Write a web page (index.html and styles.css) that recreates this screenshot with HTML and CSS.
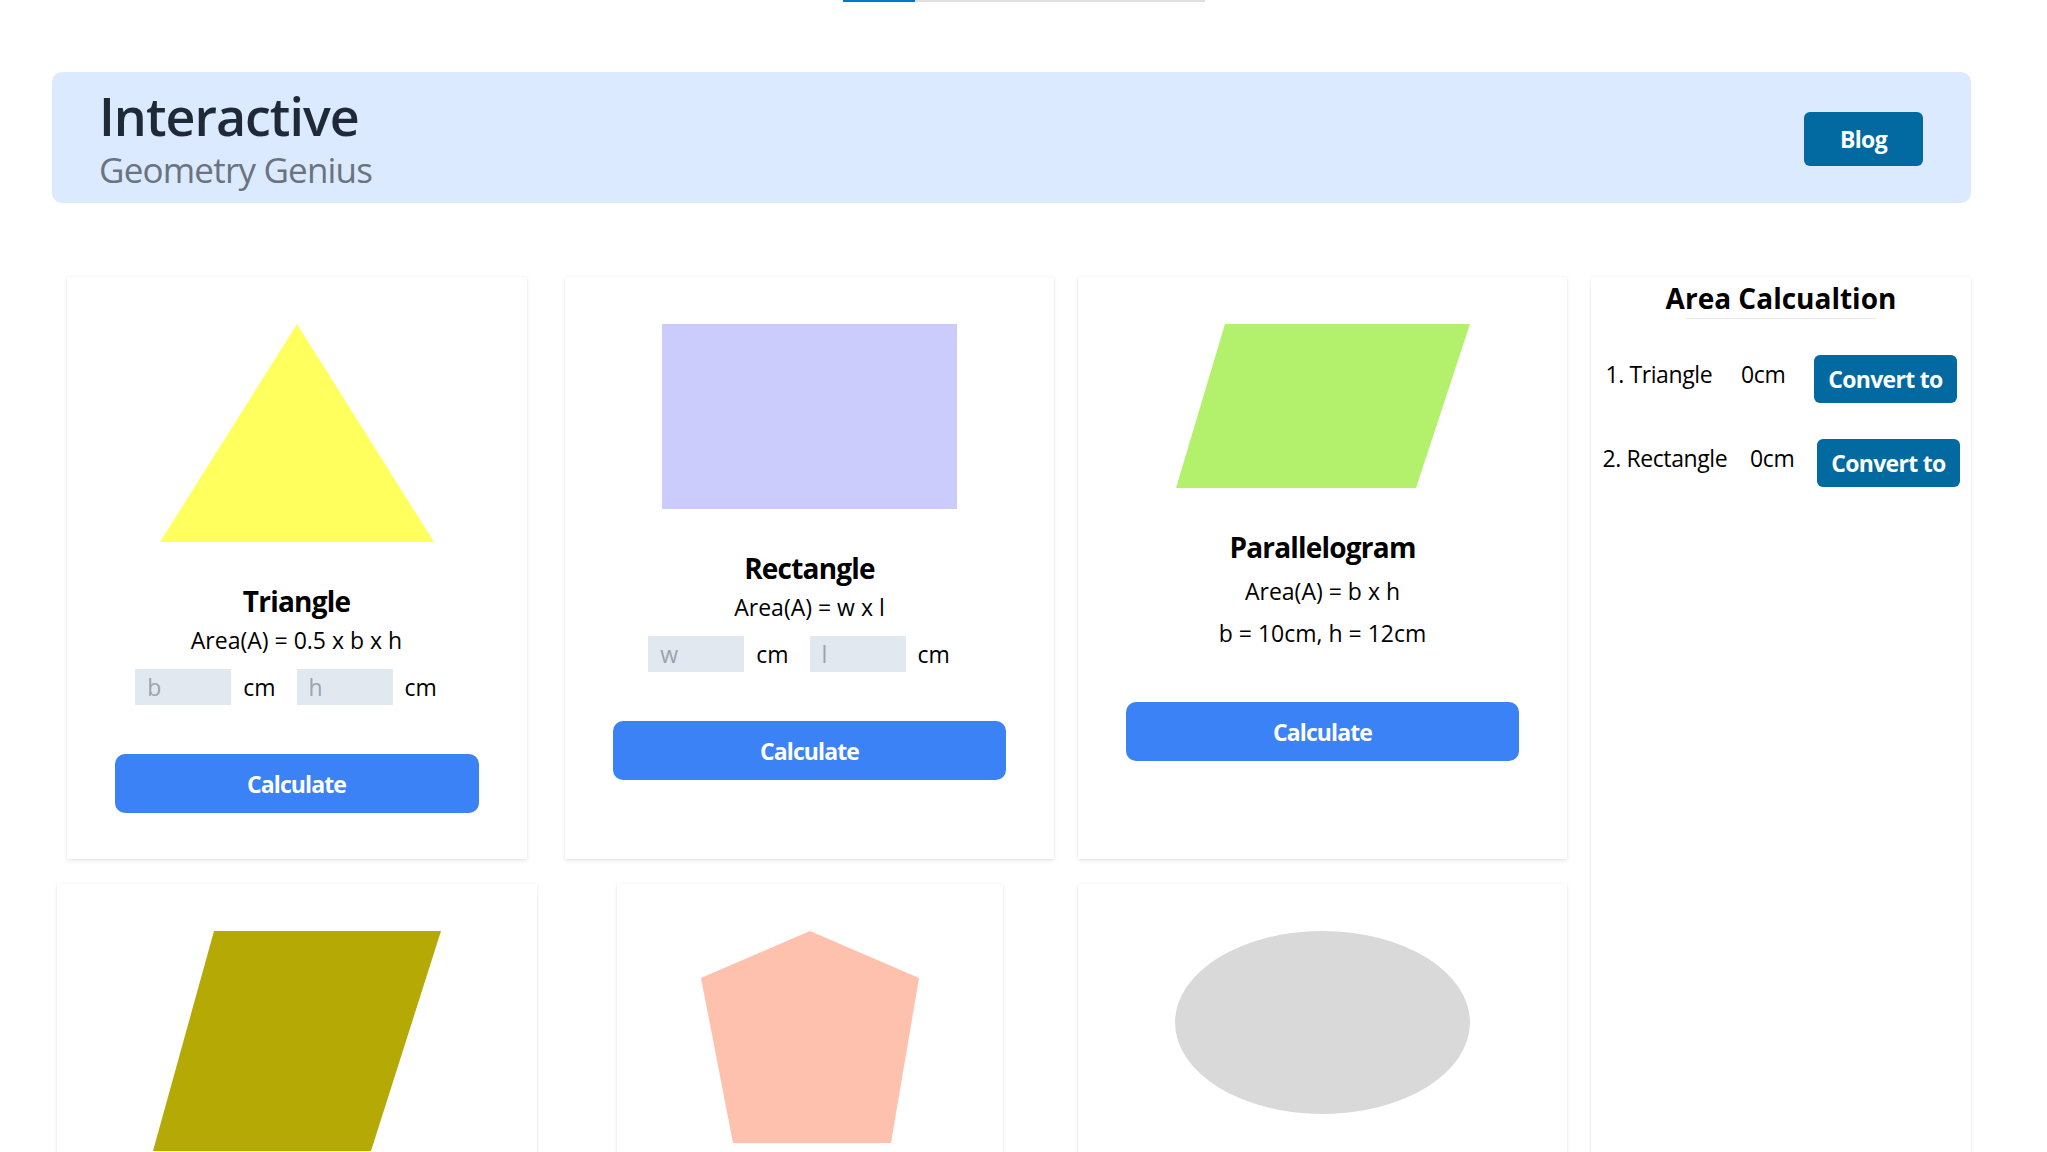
FILE: index.html
```html
<!DOCTYPE html>
<html lang="en">
<head>
<meta charset="utf-8">
<title>Interactive Geometry Genius</title>
<link rel="stylesheet" href="styles.css">
</head>
<body>
<div class="loadbar"><div class="loadbar__fill"></div></div>
<div class="page">
  <header class="hero">
    <div class="hero__titles">
      <h1 class="hero__title">Interactive</h1>
      <p class="hero__subtitle">Geometry Genius</p>
    </div>
    <a class="btn-blog" href="#">Blog</a>
  </header>

  <main class="board">
    <section class="card card--tri">
      <svg class="shape" width="274" height="218" viewBox="0 0 274 218"><polygon points="137,0 274,218 0,218" fill="#ffff5e"/></svg>
      <h3 class="card__title">Triangle</h3>
      <p class="formula">Area(A) = 0.5 x b x h</p>
      <div class="fields">
        <input class="field-input" type="text" placeholder="b"><span class="unit">cm</span>
        <input class="field-input" type="text" placeholder="h"><span class="unit">cm</span>
      </div>
      <button class="calc">Calculate</button>
    </section>

    <section class="card card--rect">
      <div class="shape shape--rect"></div>
      <h3 class="card__title">Rectangle</h3>
      <p class="formula">Area(A) = w x l</p>
      <div class="fields">
        <input class="field-input" type="text" placeholder="w"><span class="unit">cm</span>
        <input class="field-input" type="text" placeholder="l"><span class="unit">cm</span>
      </div>
      <button class="calc">Calculate</button>
    </section>

    <section class="card card--para">
      <svg class="shape" width="294" height="164" viewBox="0 0 294 164"><polygon points="49,0 294,0 240,164 0,164" fill="#b3f06b"/></svg>
      <h3 class="card__title">Parallelogram</h3>
      <p class="formula formula--spaced">Area(A) = b x h</p>
      <p class="formula formula--spaced">b = 10cm, h = 12cm</p>
      <button class="calc calc--para">Calculate</button>
    </section>

    <aside class="panel">
      <h2 class="panel__title">Area Calcualtion</h2>
      <hr class="panel__rule">
      <div class="conv-row">
        <span class="conv-label">1. Triangle</span>
        <span class="conv-label">0cm</span>
        <button class="btn-convert">Convert to</button>
      </div>
      <div class="conv-row">
        <span class="conv-label">2. Rectangle</span>
        <span class="conv-label">0cm</span>
        <button class="btn-convert">Convert to</button>
      </div>
    </aside>

    <section class="card card--trap">
      <svg class="shape" width="288" height="220" viewBox="0 0 288 220"><polygon points="61,0 288,0 218,220 0,220" fill="#b5a905"/></svg>
      <h3 class="card__title">Trapezium</h3>
      <button class="calc">Calculate</button>
    </section>

    <section class="card card--pent">
      <svg class="shape" width="218" height="212" viewBox="0 0 218 212"><polygon points="109,0 218,47 190,212 32,212 0,47" fill="#fec1ae"/></svg>
      <h3 class="card__title">Pentagon</h3>
      <button class="calc">Calculate</button>
    </section>

    <section class="card card--ell">
      <div class="shape shape--ellipse"></div>
      <h3 class="card__title">Ellipse</h3>
      <button class="calc">Calculate</button>
    </section>
  </main>
</div>
</body>
</html>
```

FILE: styles.css
```css
body {
  margin: 0;
  background: #ffffff;
  font-family: "Open Sans", "Noto Sans", sans-serif;
  color: #000000;
}

.loadbar {
  width: 362px;
  height: 2px;
  margin-left: 843px;
  background: #e0e0e0;
}

.loadbar__fill {
  width: 72px;
  height: 2px;
  background: #0078d4;
}

.page {
  width: 1919px;
  margin: 70px 0 0 52px;
  padding-bottom: 52px;
}

/* header */
.hero {
  display: flex;
  justify-content: space-between;
  align-items: center;
  background: #dbeafe;
  border-radius: 10px;
  padding: 14px 48px 11px 47px;
}

.hero__title {
  margin: 0;
  font-size: 52px;
  line-height: 60px;
  font-weight: 600;
  letter-spacing: -1px;
  color: #1f2937;
}

.hero__subtitle {
  margin: 2px 0 0;
  font-size: 35px;
  line-height: 44px;
  font-weight: 400;
  letter-spacing: -0.8px;
  color: #6b7280;
}

.btn-blog {
  display: block;
  width: 119px;
  height: 54px;
  line-height: 54px;
  text-align: center;
  border-radius: 6px;
  background: #0369a1;
  color: #ffffff;
  text-decoration: none;
  font-size: 23px;
  font-weight: 700;
  letter-spacing: -0.7px;
}

/* grid */
.board {
  display: grid;
  grid-template-columns: 489px 489px 489px 380px;
  column-gap: 24px;
  row-gap: 25px;
  margin-top: 74px;
}

.card {
  justify-self: center;
  box-sizing: border-box;
  display: flex;
  flex-direction: column;
  align-items: center;
  background: #ffffff;
  padding: 47px 48px 46px;
  box-shadow: 0 2px 4px rgba(0, 0, 0, 0.08), 0 0 2px rgba(0, 0, 0, 0.07);
}

.card--tri { width: 460px; }
.card--rect { width: 489px; }
.card--para { width: 489px; }
.card--trap { width: 480px; }
.card--pent { width: 386px; }
.card--ell { width: 489px; }

.shape {
  display: block;
  flex: none;
  margin-bottom: 39px;
}

.shape--rect {
  width: 295px;
  height: 185px;
  background: #ccccfc;
}

.shape--ellipse {
  width: 295px;
  height: 183px;
  border-radius: 50%;
  background: #d9d9d9;
}

.card__title {
  margin: 0;
  font-size: 28px;
  line-height: 40px;
  font-weight: 700;
  letter-spacing: -0.8px;
}

.formula {
  margin: 2px 0 0;
  font-size: 23px;
  line-height: 35px;
}

.formula--spaced {
  margin-top: 7px;
}

.fields {
  display: flex;
  align-items: center;
  margin-top: 11px;
}

.field-input {
  box-sizing: border-box;
  width: 96px;
  height: 36px;
  padding: 0 12px;
  border: 0;
  border-radius: 0;
  background: #e2e8f0;
  font-family: inherit;
  font-size: 23px;
  color: #000000;
  outline: none;
}

.field-input::placeholder {
  color: #9ca3af;
}

.unit {
  margin: 0 21px 0 12px;
  font-size: 23px;
  line-height: 35px;
}

.calc {
  align-self: stretch;
  height: 59px;
  margin-top: 49px;
  border: 0;
  border-radius: 10px;
  background: #3b82f6;
  color: #ffffff;
  font-family: inherit;
  font-size: 23px;
  font-weight: 700;
  letter-spacing: -0.9px;
}

.calc--para {
  margin-top: 51px;
}

/* side panel */
.panel {
  grid-column: 4;
  grid-row: 1 / span 2;
  padding-top: 1px;
  background: #ffffff;
  box-shadow: 0 2px 4px rgba(0, 0, 0, 0.08), 0 0 2px rgba(0, 0, 0, 0.07);
}

.panel__title {
  margin: 0;
  text-align: center;
  font-size: 28px;
  line-height: 40px;
  font-weight: 700;
}

.panel__rule {
  width: 50%;
  height: 0;
  margin: 0 auto;
  border: 0;
  border-top: 1px solid #e5e7eb;
}

.conv-row {
  display: flex;
  justify-content: space-around;
  align-items: center;
  margin-top: 36px;
}

.conv-label {
  margin-bottom: 10px;
  font-size: 23px;
  line-height: 35px;
  letter-spacing: -0.4px;
}

.btn-convert {
  height: 48px;
  padding: 0 14px;
  border: 0;
  border-radius: 6px;
  background: #0369a1;
  color: #ffffff;
  font-family: inherit;
  font-size: 23px;
  font-weight: 700;
  letter-spacing: -0.7px;
}
```
